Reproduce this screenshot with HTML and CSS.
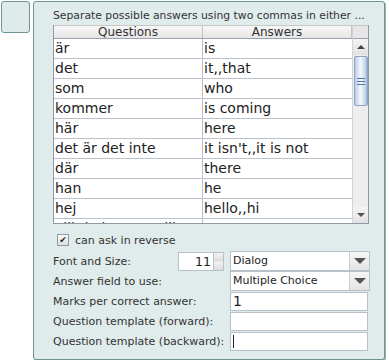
FILE: index.html
```html
<!DOCTYPE html>
<html lang="en">
<head>
    <meta charset="UTF-8">
    <title>Question list</title>
    <link rel="stylesheet" href="styles.css">
</head>
<body>
    <div class="side-btn"></div>

    <div class="panel">
        <p class="hint">Separate possible answers using two commas in either ...</p>

        <div class="table">
            <div class="grid">
                <div class="head">
                    <div class="hcell">Questions</div>
                    <div class="hcell">Answers</div>
                </div>
                <div class="row"><span>är</span><span>is</span></div>
                <div class="row"><span>det</span><span>it,,that</span></div>
                <div class="row"><span>som</span><span>who</span></div>
                <div class="row"><span>kommer</span><span>is coming</span></div>
                <div class="row"><span>här</span><span>here</span></div>
                <div class="row"><span>det är det inte</span><span>it isn't,,it is not</span></div>
                <div class="row"><span>där</span><span>there</span></div>
                <div class="row"><span>han</span><span>he</span></div>
                <div class="row"><span>hej</span><span>hello,,hi</span></div>
                <div class="row"><span>vill du ha mer vill</span><span>want</span></div>
            </div>
            <div class="scroll">
                <div class="corner"></div>
                <div class="arrow up"></div>
                <div class="track">
                    <div class="thumb"><i></i><i></i><i></i></div>
                </div>
                <div class="arrow down"></div>
            </div>
        </div>

        <label class="check"><span class="box">&#10004;</span> can ask in reverse</label>

        <div class="form">
            <div class="line">
                <span class="lbl">Font and Size:</span>
                <div class="spinner">
                    <span class="num">11</span>
                    <span class="spin"><b></b><b></b></span>
                </div>
                <div class="combo"><span>Dialog</span><span class="drop"></span></div>
            </div>
            <div class="line">
                <span class="lbl">Answer field to use:</span>
                <div class="combo"><span>Multiple Choice</span><span class="drop"></span></div>
            </div>
            <div class="line">
                <span class="lbl">Marks per correct answer:</span>
                <div class="field big">1</div>
            </div>
            <div class="line">
                <span class="lbl">Question template (forward):</span>
                <div class="field"></div>
            </div>
            <div class="line">
                <span class="lbl">Question template (backward):</span>
                <div class="field"><span class="caret"></span></div>
            </div>
        </div>
    </div>
</body>
</html>
```

FILE: styles.css
```css
* {
    box-sizing: border-box;
}

body {
    margin: 0;
    background: #fff;
    font-family: "DejaVu Sans", sans-serif;
    font-size: 11px;
    color: #222;
    display: flex;
    align-items: flex-start;
}

.side-btn {
    margin: 1px 0 0 1px;
    width: 29px;
    height: 32px;
    border: 1px solid #6a9595;
    border-radius: 3px;
    background: #dfeaea;
}

.panel {
    margin: 1px 0 0 3px;
    width: 352px;
    height: 359px;
    border: 1px solid #6a9595;
    border-radius: 3px;
    background: #e0ebeb;
    padding: 0 0 0 19px;
    box-shadow: 1px 1px 0 #9bb3b3;
}

.hint {
    margin: 7px 0 0 0;
    height: 16px;
    line-height: 14px;
    font-size: 10.8px;
    color: #333;
}

/* the table with its scrollbar */

.table {
    width: 316px;
    height: 199px;
    border: 1px solid #8f9aa5;
    border-top: 0;
    background: #fff;
    display: flex;
}

.grid {
    width: 299px;
    overflow: hidden;
}

.head {
    display: flex;
    height: 14px;
    background: linear-gradient(to bottom, #f7f7f7, #e6e6e6);
    border-top: 1px solid #c8c8c8;
    border-bottom: 1px solid #9aa3ad;
}

.hcell {
    width: 149px;
    text-align: center;
    line-height: 12px;
    font-size: 12px;
    color: #333;
    border-right: 1px solid #c4c4c4;
}

.row {
    display: flex;
    height: 20px;
    border-bottom: 1px solid #b9c1c9;
    font-size: 14px;
    line-height: 19px;
}

.row span {
    width: 149px;
    padding-left: 1px;
    white-space: nowrap;
    overflow: hidden;
}

.row span:first-child {
    border-right: 1px solid #b9c1c9;
}

.scroll {
    width: 16px;
    display: flex;
    flex-direction: column;
    background: #eeeeee;
    border-left: 1px solid #d0d4d8;
}

.corner {
    height: 14px;
    background: #e6e6e6;
    border-top: 1px solid #c8c8c8;
    border-bottom: 1px solid #9aa3ad;
}

.arrow {
    height: 16px;
    background: linear-gradient(to bottom, #f4f4f4, #e2e2e2);
    position: relative;
}

.arrow::after {
    content: "";
    position: absolute;
    left: 4px;
    top: 6px;
    border-left: 4px solid transparent;
    border-right: 4px solid transparent;
}

.up::after {
    border-bottom: 4px solid #444;
}

.down::after {
    border-top: 4px solid #555;
}

.track {
    flex: 1;
    padding-top: 1px;
}

.thumb {
    margin-left: 1px;
    width: 14px;
    height: 50px;
    border: 1px solid #8ea4c2;
    border-radius: 2px;
    background: linear-gradient(to right, #b8cce6, #f4f8fc 45%, #cfdcee 80%, #9fb6d8);
    display: flex;
    flex-direction: column;
    justify-content: center;
    align-items: center;
    gap: 2px;
}

.thumb i {
    width: 8px;
    height: 1px;
    background: #5673a6;
}

/* checkbox line */

.check {
    display: flex;
    align-items: center;
    gap: 6px;
    margin: 9px 0 0 4px;
    height: 14px;
    font-size: 11px;
    color: #333;
}

.box {
    width: 12px;
    height: 12px;
    border: 1px solid #8e9aa6;
    background: linear-gradient(to bottom, #fafafa, #dedede);
    font-size: 9px;
    line-height: 10px;
    text-align: center;
    color: #222;
}

/* the form below */

.form {
    margin-top: 4px;
}

.line {
    display: flex;
    align-items: center;
    height: 20px;
}

.lbl {
    width: 177px;
    color: #333;
    white-space: nowrap;
}

.line:first-child .lbl {
    width: 125px;
}

.spinner {
    display: flex;
    width: 46px;
    height: 19px;
    margin-right: 6px;
    border: 1px solid #b8c0c8;
    background: #fff;
}

.num {
    flex: 1;
    text-align: right;
    font-size: 12.5px;
    line-height: 17px;
    padding-right: 2px;
}

.spin {
    width: 10px;
    display: flex;
    flex-direction: column;
    gap: 1px;
    background: #e8e8e8;
    border-left: 1px solid #c0c0c0;
}

.spin b {
    flex: 1;
    background: linear-gradient(to bottom, #f2f2f2, #dcdcdc);
}

.combo {
    display: flex;
    width: 140px;
    height: 20px;
    border: 1px solid #b8c0c8;
    background: #fff;
    font-size: 11px;
    line-height: 18px;
}

.combo span:first-child {
    flex: 1;
    padding-left: 2px;
}

.drop {
    width: 20px;
    border-left: 1px solid #c8ccd0;
    background: linear-gradient(to bottom, #f6f6f6, #e4e4e4);
    position: relative;
}

.drop::after {
    content: "";
    position: absolute;
    left: 4px;
    top: 6px;
    border-left: 6px solid transparent;
    border-right: 6px solid transparent;
    border-top: 6px solid #555;
}

.field {
    width: 138px;
    height: 19px;
    border: 1px solid #b8c0c8;
    background: #fff;
    padding-left: 2px;
    display: flex;
    align-items: center;
}

.big {
    font-size: 14px;
}

.caret {
    width: 1px;
    height: 13px;
    background: #222;
}
```
